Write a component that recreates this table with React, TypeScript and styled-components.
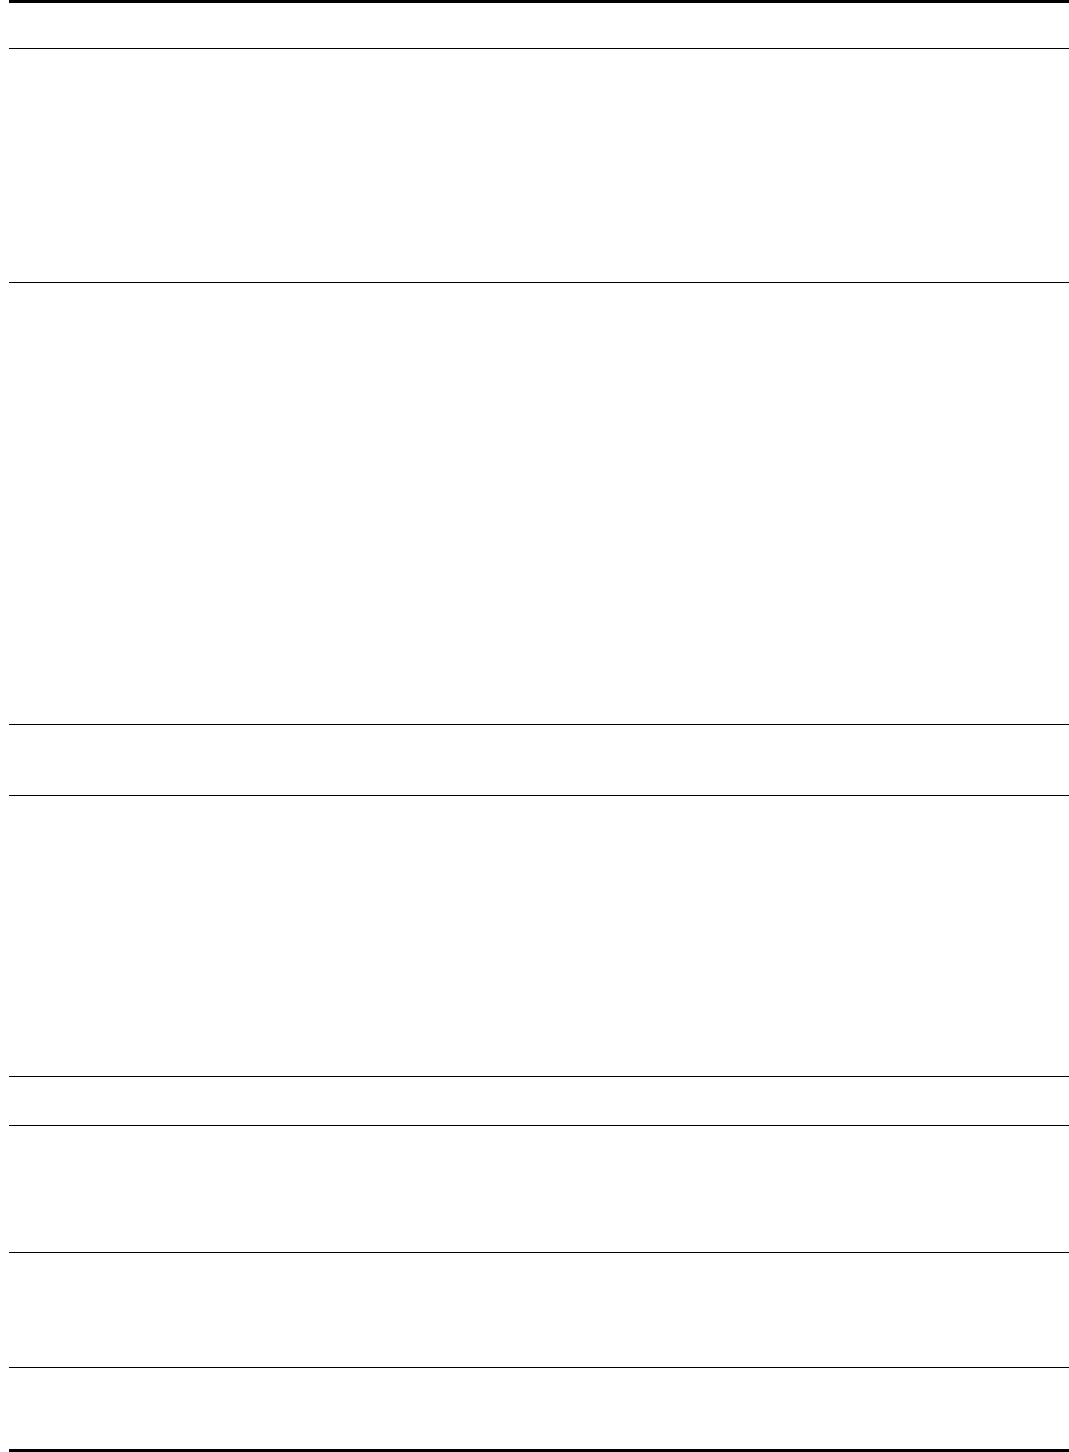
import styled, { createGlobalStyle } from "styled-components";

const GlobalStyle = createGlobalStyle`
    html, body {
        margin: 0;
        padding: 0;
        background: #ffffff;
        font-family: "Liberation Serif", "Times New Roman", serif;
    }
`

const Sheet = styled.div`
    display: flex;
    flex-direction: column;
    margin-left: 9px;
    width: calc(100% - 9px);
    border-top: 3px solid #000;
    border-bottom: 3px solid #000;
`

const Row = styled.div<{ $h: number; $last?: boolean }>`
    height: ${p => p.$h}px;
    border-bottom: ${p => (p.$last ? "none" : "1px solid #000")};
    display: grid;
    grid-template-columns: 1fr 1fr 1fr;
`

const Cell = styled.div`
    color: transparent;
`

// content heights between rules
const rows = [45, 233, 441, 70, 280, 48, 126, 114, 81];

export default function App() {
    return (
        <>
            <GlobalStyle />
            <Sheet>
                {rows.map((h, i) => (
                    <Row key={i} $h={h} $last={i === rows.length - 1}>
                        <Cell />
                        <Cell />
                        <Cell />
                    </Row>
                ))}
            </Sheet>
        </>
    )
}
